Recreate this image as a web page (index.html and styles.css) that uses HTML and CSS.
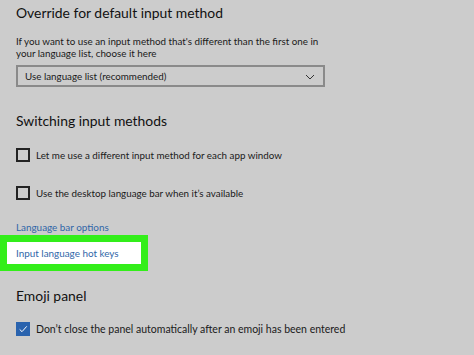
FILE: index.html
```html
<!DOCTYPE html>
<html lang="en">
<head>
    <meta charset="UTF-8">
    <title>Language settings</title>
    <link rel="stylesheet" href="styles.css">
</head>
<body>
    <div class="page">
        <h2 class="title first">Override for default input method</h2>
        <p class="desc">If you want to use an input method that's different than the first one in<br>
            your language list, choose it here</p>

        <div class="select">
            <span>Use language list (recommended)</span>
            <svg class="chevron" width="10" height="6" viewBox="0 0 10 6">
                <path d="M1 1 L5 5 L9 1" fill="none" stroke="#333" stroke-width="1"/>
            </svg>
        </div>

        <h2 class="title second">Switching input methods</h2>

        <label class="check row-one">
            <span class="box"></span>
            Let me use a different input method for each app window
        </label>
        <label class="check row-two">
            <span class="box"></span>
            Use the desktop language bar when it’s available
        </label>

        <a class="link bar-link" href="#">Language bar options</a>

        <div class="highlight">
            <div class="highlight-inner">
                <a class="link" href="#">Input language hot keys</a>
            </div>
        </div>

        <h2 class="title third">Emoji panel</h2>

        <label class="check row-three">
            <span class="box checked">
                <svg width="12" height="12" viewBox="0 0 12 12">
                    <path d="M2 6.5 L4.8 9.2 L10.5 2.8" fill="none" stroke="#fff" stroke-width="1.2"/>
                </svg>
            </span>
            Don’t close the panel automatically after an emoji has been entered
        </label>
    </div>
</body>
</html>
```

FILE: styles.css
```css
body {
    margin: 0;
    padding: 0;
    background-color: #cccccc;
    font-family: 'Lato', 'Noto Sans', sans-serif;
    color: #1a1a1a;
    overflow: hidden;
}

.page {
    padding: 0 16px;
}

.title {
    font-weight: 400;
    font-size: 13.9px;
    line-height: 20px;
    margin: 0;
    color: #111;
}

.title.first {
    padding-top: 3px;
}

.title.second {
    margin-top: 24px;
}

.title.third {
    margin-top: 15px;
}

.desc {
    font-size: 9.8px;
    line-height: 12px;
    margin: 12px 0 0;
}

.select {
    margin-top: 6px;
    width: 290px;
    height: 18px;
    border: 2px solid #8a8a8a;
    display: flex;
    align-items: center;
    justify-content: space-between;
    padding: 0 8px 0 7px;
    font-size: 9.8px;
}

.chevron {
    margin-top: 1px;
}

.check {
    display: flex;
    align-items: center;
    font-size: 9.8px;
    line-height: 14px;
}

.row-one {
    margin-top: 17px;
}

.row-two {
    margin-top: 24px;
}

.row-three {
    margin-top: 16px;
    font-size: 10.5px;
}

.box {
    width: 10px;
    height: 10px;
    border: 2px solid #222;
    margin-right: 6px;
    flex-shrink: 0;
    display: flex;
    align-items: center;
    justify-content: center;
}

.box.checked {
    background: #2a63ae;
    border-color: #2a63ae;
}

.link {
    color: #2f66a8;
    text-decoration: none;
    font-size: 9.9px;
    line-height: 14px;
}

.bar-link {
    display: block;
    margin-top: 20px;
}

.highlight {
    margin: 1px 0 0 -16px;
    width: 134px;
    padding: 7px;
    background: #33ee1a;
}

.highlight-inner {
    background: #ffffff;
    height: 22px;
    padding-left: 9px;
    display: flex;
    align-items: center;
}
```
